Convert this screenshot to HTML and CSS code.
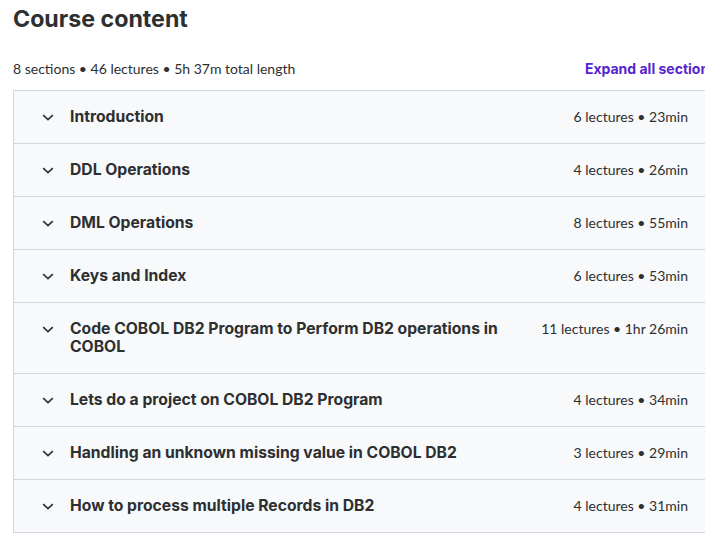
FILE: index.html
```html
<!DOCTYPE html>
<html>

<head>
    <meta http-equiv="Content-Type" content="text/html;charset=UTF-8" />
    <meta name="viewport" content="width=device-width,initial-scale=1">
    <title>Course content</title>
    <link rel="stylesheet" href="styles.css">
</head>

<body>
    <div class="curriculum">
        <h2 class="curriculum_title">Course content</h2>
        <div class="curriculum_summary">
            <span>8 sections • 46 lectures • 5h 37m total length</span>
            <a class="expand_all">Expand all sections</a>
        </div>
        <ul class="section_list">
            <li class="section">
                <span class="chevron"><svg viewBox="0 0 12 7" width="12" height="7"><path d="M1.2 1.2L6 5.6l4.8-4.4" /></svg></span>
                <span class="section_title">Introduction</span>
                <span class="section_meta">6 lectures • 23min</span>
            </li>
            <li class="section">
                <span class="chevron"><svg viewBox="0 0 12 7" width="12" height="7"><path d="M1.2 1.2L6 5.6l4.8-4.4" /></svg></span>
                <span class="section_title">DDL Operations</span>
                <span class="section_meta">4 lectures • 26min</span>
            </li>
            <li class="section">
                <span class="chevron"><svg viewBox="0 0 12 7" width="12" height="7"><path d="M1.2 1.2L6 5.6l4.8-4.4" /></svg></span>
                <span class="section_title">DML Operations</span>
                <span class="section_meta">8 lectures • 55min</span>
            </li>
            <li class="section">
                <span class="chevron"><svg viewBox="0 0 12 7" width="12" height="7"><path d="M1.2 1.2L6 5.6l4.8-4.4" /></svg></span>
                <span class="section_title">Keys and Index</span>
                <span class="section_meta">6 lectures • 53min</span>
            </li>
            <li class="section">
                <span class="chevron"><svg viewBox="0 0 12 7" width="12" height="7"><path d="M1.2 1.2L6 5.6l4.8-4.4" /></svg></span>
                <span class="section_title">Code COBOL DB2 Program to Perform DB2 operations in COBOL</span>
                <span class="section_meta">11 lectures • 1hr 26min</span>
            </li>
            <li class="section">
                <span class="chevron"><svg viewBox="0 0 12 7" width="12" height="7"><path d="M1.2 1.2L6 5.6l4.8-4.4" /></svg></span>
                <span class="section_title">Lets do a project on COBOL DB2 Program</span>
                <span class="section_meta">4 lectures • 34min</span>
            </li>
            <li class="section">
                <span class="chevron"><svg viewBox="0 0 12 7" width="12" height="7"><path d="M1.2 1.2L6 5.6l4.8-4.4" /></svg></span>
                <span class="section_title">Handling an unknown missing value in COBOL DB2</span>
                <span class="section_meta">3 lectures • 29min</span>
            </li>
            <li class="section">
                <span class="chevron"><svg viewBox="0 0 12 7" width="12" height="7"><path d="M1.2 1.2L6 5.6l4.8-4.4" /></svg></span>
                <span class="section_title">How to process multiple Records in DB2</span>
                <span class="section_meta">4 lectures • 31min</span>
            </li>
        </ul>
    </div>
</body>

</html>
```

FILE: styles.css
```css
* {
    margin: 0;
    padding: 0;
    box-sizing: border-box;
}

html {
    font-family: Lato, "Liberation Sans", sans-serif;
    color: #2d2f31;
    background: #fff;
}

body {
    overflow: hidden;
}

li {
    list-style: none;
}

.curriculum {
    width: 700px;
    margin-left: 13px;
    padding-top: 3px;
}

.curriculum_title {
    font-family: Inter, "Liberation Sans", sans-serif;
    font-size: 23.2px;
    font-weight: 700;
    line-height: 32px;
}

.curriculum_summary {
    display: flex;
    justify-content: space-between;
    align-items: center;
    margin-top: 23px;
    height: 20px;
    margin-bottom: 12px;
    font-size: 14px;
}

.expand_all {
    font-family: Inter, "Liberation Sans", sans-serif;
    color: #5624d0;
    font-weight: 700;
    white-space: nowrap;
    margin-right: -4px;
}

.section_list {
    border: 1px solid #d1d7dc;
    border-bottom: none;
}

.section {
    display: flex;
    align-items: flex-start;
    padding: 17px 24px;
    background: #f7f9fa;
    border-bottom: 1px solid #d1d7dc;
}

.chevron {
    width: 20px;
    height: 18px;
    margin-right: 12px;
    display: flex;
    align-items: center;
    justify-content: center;
    flex-shrink: 0;
}

.chevron path {
    fill: none;
    stroke: #2d2f31;
    stroke-width: 1.6;
}

.section_title {
    flex: 1;
    font-family: Inter, "Liberation Sans", sans-serif;
    font-size: 15.7px;
    font-weight: 700;
    line-height: 18px;
}

.section_meta {
    margin-left: 40px;
    font-size: 14px;
    line-height: 18px;
    white-space: nowrap;
}
```
